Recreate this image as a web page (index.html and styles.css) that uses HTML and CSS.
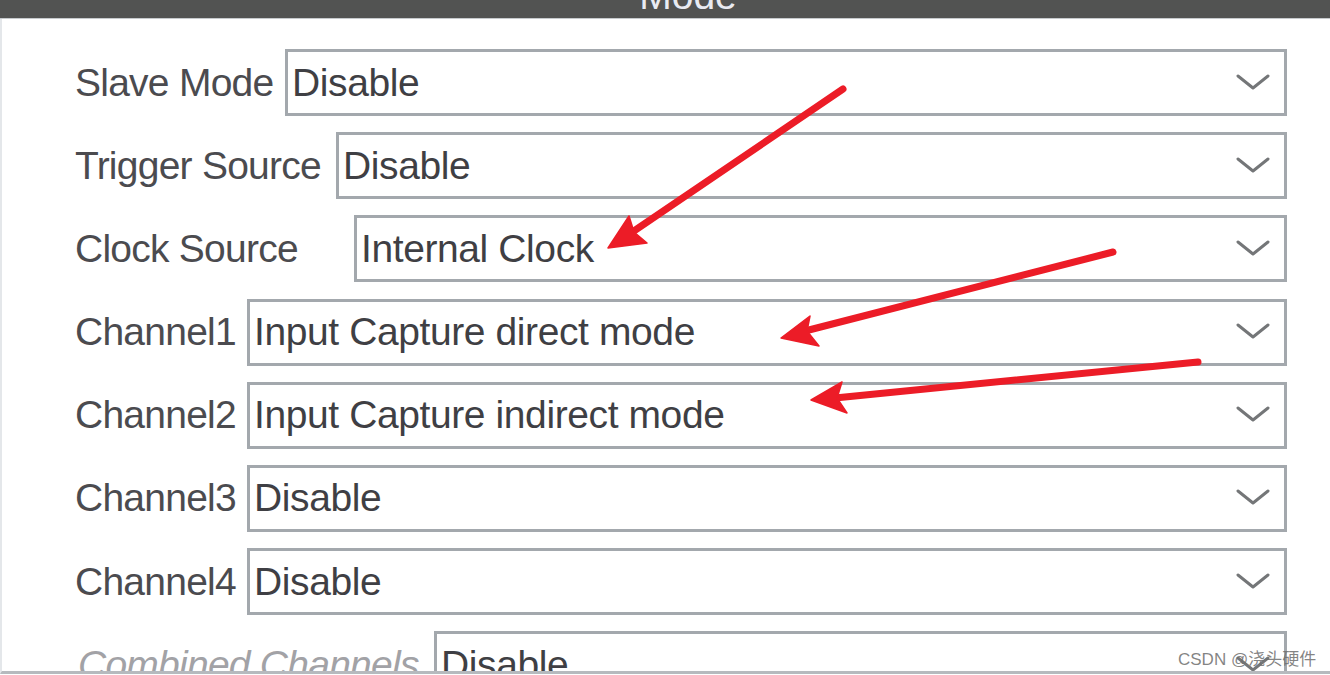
FILE: index.html
```html
<!DOCTYPE html>
<html>
<head>
<meta charset="utf-8">
<link rel="stylesheet" href="styles.css">
</head>
<body>
<div class="screen">
  <header class="titlebar"><span class="title">Mode</span></header>
  <main class="panel">
    <div class="row">
      <span class="label label-slave">Slave Mode</span>
      <div class="select"><span class="value">Disable</span><svg class="chev" viewBox="0 0 34 18"><polyline points="2,3 17,15 32,3"/></svg></div>
    </div>
    <div class="row">
      <span class="label label-trigger">Trigger Source</span>
      <div class="select"><span class="value">Disable</span><svg class="chev" viewBox="0 0 34 18"><polyline points="2,3 17,15 32,3"/></svg></div>
    </div>
    <div class="row">
      <span class="label label-clock">Clock Source</span>
      <div class="select"><span class="value">Internal Clock</span><svg class="chev" viewBox="0 0 34 18"><polyline points="2,3 17,15 32,3"/></svg></div>
    </div>
    <div class="row">
      <span class="label label-channel">Channel1</span>
      <div class="select"><span class="value">Input Capture direct mode</span><svg class="chev" viewBox="0 0 34 18"><polyline points="2,3 17,15 32,3"/></svg></div>
    </div>
    <div class="row">
      <span class="label label-channel">Channel2</span>
      <div class="select"><span class="value">Input Capture indirect mode</span><svg class="chev" viewBox="0 0 34 18"><polyline points="2,3 17,15 32,3"/></svg></div>
    </div>
    <div class="row">
      <span class="label label-channel">Channel3</span>
      <div class="select"><span class="value">Disable</span><svg class="chev" viewBox="0 0 34 18"><polyline points="2,3 17,15 32,3"/></svg></div>
    </div>
    <div class="row">
      <span class="label label-channel">Channel4</span>
      <div class="select"><span class="value">Disable</span><svg class="chev" viewBox="0 0 34 18"><polyline points="2,3 17,15 32,3"/></svg></div>
    </div>
    <div class="row">
      <span class="label label-combined">Combined Channels</span>
      <div class="select"><span class="value">Disable</span><svg class="chev" viewBox="0 0 34 18"><polyline points="2,3 17,15 32,3"/></svg></div>
    </div>
  </main>
  <svg class="arrows" viewBox="0 0 1330 675" width="1330" height="675">
    <g class="arrow">
      <line x1="843" y1="89" x2="628" y2="235"/>
      <polygon points="608,248 629,216 634,232 647,243"/>
    </g>
    <g class="arrow">
      <line x1="1113" y1="252" x2="805" y2="331"/>
      <polygon points="781,338 810,316 807,331 819,346"/>
    </g>
    <g class="arrow">
      <line x1="1198" y1="362" x2="835" y2="398"/>
      <polygon points="811,400 842,382 837,398 847,413"/>
    </g>
  </svg>
  <div class="watermark">CSDN @浇头硬件</div>
</div>
</body>
</html>
```
FILE: styles.css
```css
html, body {
  margin: 0;
  padding: 0;
  background: #ffffff;
  overflow: hidden;
}

.screen {
  position: relative;
  width: 1330px;
  height: 675px;
  overflow: hidden;
  font-family: "Liberation Sans", Arial, sans-serif;
}

.titlebar {
  height: 18px;
  background: #525352;
  border-bottom: 1px solid #c6cacd;
  overflow: hidden;
  display: flex;
  justify-content: center;
}

.title {
  display: block;
  font-size: 39px;
  line-height: 39px;
  margin-top: -24px;
  margin-left: 46px;
  color: #e9ebf2;
}

.panel {
  height: 655px;
  box-sizing: border-box;
  border-left: 2px solid #e4e7ea;
  border-bottom: 3px solid #b6babe;
  padding: 30px 43px 0 73px;
  overflow: hidden;
  display: flex;
  flex-direction: column;
  gap: 16.2px;
}

.row {
  display: flex;
  align-items: center;
  flex-shrink: 0;
}

.label {
  flex-shrink: 0;
  font-size: 39px;
  letter-spacing: -0.75px;
  color: #4b4b4f;
  white-space: nowrap;
}

.label-slave { width: 210px; }
.label-trigger { width: 261px; }
.label-clock { width: 279px; }
.label-channel { width: 172px; }
.label-combined {
  width: 359px;
  font-style: italic;
  color: #a2a2a6;
  padding-left: 3px;
  box-sizing: border-box;
}

.select {
  flex: 1;
  height: 67px;
  box-sizing: border-box;
  border: 3px solid #a3a8ad;
  background: #ffffff;
  display: flex;
  align-items: center;
  justify-content: space-between;
  padding: 0 14px 0 4px;
}

.value {
  font-size: 39px;
  letter-spacing: -0.4px;
  color: #3f3f44;
  white-space: nowrap;
}

.chev {
  width: 34px;
  height: 18px;
  margin-top: -2px;
}

.chev polyline {
  fill: none;
  stroke: #747678;
  stroke-width: 3;
  stroke-linejoin: round;
  stroke-linecap: round;
}

.arrows {
  position: absolute;
  left: 0;
  top: 0;
  pointer-events: none;
}

.arrow line {
  stroke: #ec1c27;
  stroke-width: 7;
  stroke-linecap: round;
}

.arrow polygon {
  fill: #ec1c27;
  stroke: #ec1c27;
  stroke-width: 1.5;
  stroke-linejoin: round;
}

.watermark {
  position: absolute;
  left: 1178px;
  top: 645px;
  font-family: "Liberation Sans", "Noto Sans CJK SC", sans-serif;
  font-size: 17px;
  color: rgba(110, 110, 110, 0.85);
  white-space: nowrap;
}
```
